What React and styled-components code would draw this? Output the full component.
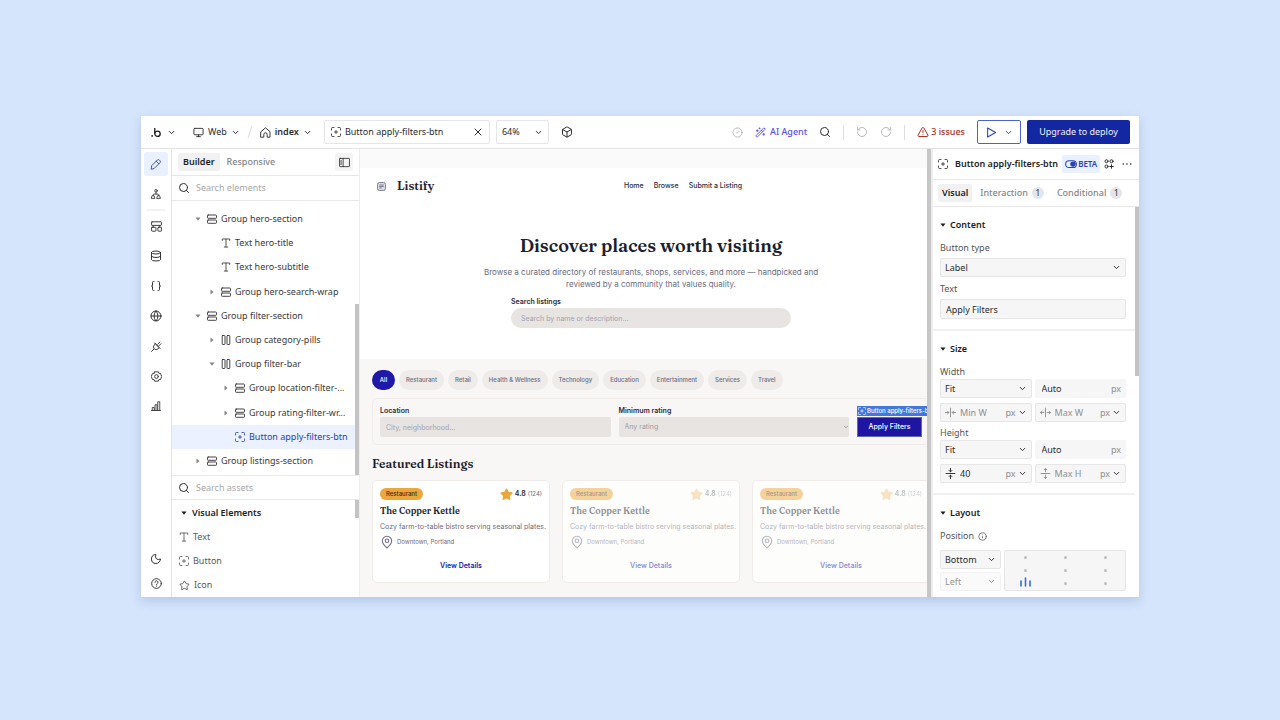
import styled, { createGlobalStyle, css } from "styled-components";
import {
  Box,
  Braces,
  ChevronDown,
  CircleCheck,
  Database,
  Globe,
  Info,
  MapPin,
  Monitor,
  Moon,
  RotateCcw,
  RotateCw,
  Search,
  Star,
  TriangleAlert,
  WandSparkles,
  X,
} from "lucide-react";

const tree = [
  { name: "Group hero-section", depth: 0, icon: "rows", state: "open" },
  { name: "Text hero-title", depth: 1, icon: "text" },
  { name: "Text hero-subtitle", depth: 1, icon: "text" },
  { name: "Group hero-search-wrap", depth: 1, icon: "rows", state: "closed" },
  { name: "Group filter-section", depth: 0, icon: "rows", state: "open" },
  { name: "Group category-pills", depth: 1, icon: "columns", state: "closed" },
  { name: "Group filter-bar", depth: 1, icon: "columns", state: "open" },
  { name: "Group location-filter-...", depth: 2, icon: "rows", state: "closed" },
  { name: "Group rating-filter-wr...", depth: 2, icon: "rows", state: "closed" },
  { name: "Button apply-filters-btn", depth: 2, icon: "button", active: true },
  { name: "Group listings-section", depth: 0, icon: "rows", state: "closed" },
];

const categories = [
  "All",
  "Restaurant",
  "Retail",
  "Health & Wellness",
  "Technology",
  "Education",
  "Entertainment",
  "Services",
  "Travel",
];

const Line = ({ size = 10, children, ...rest }) => (
  <svg
    width={size}
    height={size}
    viewBox="0 0 20 20"
    fill="none"
    stroke="currentColor"
    strokeWidth="1.7"
    strokeLinecap="round"
    strokeLinejoin="round"
    aria-hidden="true"
    {...rest}
  >
    {children}
  </svg>
);

const ButtonIcon = (props) => (
  <Line {...props}>
    <path d="M1 6V3a2 2 0 0 1 2-2h3M14 1h3a2 2 0 0 1 2 2v3M19 14v3a2 2 0 0 1-2 2h-3M6 19H3a2 2 0 0 1-2-2v-3M10 7v6M7 10h6" />
  </Line>
);

const RowsIcon = () => (
  <Line strokeWidth="1.9">
    <rect x="1" y="2" width="18" height="6.6" rx="1.4" />
    <rect x="1" y="12" width="18" height="6.6" rx="1.4" />
  </Line>
);

const ColumnsIcon = () => (
  <Line strokeWidth="1.9">
    <rect x="2.4" y="1" width="5.6" height="18" rx="1.2" />
    <rect x="12" y="1" width="5.6" height="18" rx="1.2" />
  </Line>
);

const TextIcon = () => (
  <Line>
    <path d="M2.5 5V2h15v3M10 2v16M6.5 18h7" />
  </Line>
);

const PencilIcon = () => (
  <Line size={12} strokeWidth="1.5">
    <path d="M2 18l.8-5.200L12.300 3.300a2.200 2.200 0 0 1 3.100 0l1.300 1.300a2.200 2.200 0 0 1 0 3.100L7.200 17.200zM10.300 5.300l4.400 4.400" />
  </Line>
);

const SitemapIcon = () => (
  <Line>
    <circle cx="10" cy="3.600" r="2.600" />
    <path d="M10 6.200v4M4.500 13v-1.500a1.300 1.300 0 0 1 1.300-1.300h8.400a1.300 1.300 0 0 1 1.300 1.300V13" />
    <path d="M2.800 13.500h3.400l1.600 5.300H1.200zM13.800 13.500h3.400l1.600 5.300h-6.600z" />
  </Line>
);

const ComponentsIcon = () => (
  <Line size={11}>
    <rect x="1" y="1.500" width="18" height="6.500" rx="1" />
    <path d="M4 8v3M16 8v3" />
    <rect x="1" y="11.500" width="8" height="7" rx="1" />
    <rect x="12.500" y="11.500" width="6.500" height="7" rx="1" />
  </Line>
);

const PlugIcon = () => (
  <Line size={11}>
    <path d="M1 19l4-4M8 5l7 7-2.200 2.200a4.950 4.950 0 0 1-7-7zM6.500 3.500l10 10M12 6l4-4M14 9l4-4" />
  </Line>
);

const GearIcon = () => (
  <Line size={11}>
    <path d="M6.800 1.500h6.400l1.200 2.700 2.900.3 2.200 5.500-2.200 5.500-2.900.3-1.200 2.700H6.800l-1.200-2.700-2.900-.3L.500 10l2.200-5.500 2.900-.3z" />
    <circle cx="10" cy="10" r="3.400" />
  </Line>
);

const ChartIcon = () => (
  <Line>
    <path d="M1 19h18M2.500 19v-6h4v6M8 19V7.500h4V19M13.500 19V1.500h4V19" />
  </Line>
);

const HelpIcon = () => (
  <Line size={11}>
    <circle cx="10" cy="10" r="8.800" />
    <path d="M7.300 7.800a2.700 2.700 0 1 1 4 2.400c-.9.500-1.300.9-1.300 1.900M10 14.600v.2" />
  </Line>
);

const HomeIcon = () => (
  <Line size={11}>
    <path d="M1.800 8.500L10 1.500l8.200 7V18.500H13v-5a3 3 0 0 0-6 0v5H1.800z" />
  </Line>
);

const PanelIcon = () => (
  <Line size={11} strokeWidth="1.5">
    <rect x="1" y="2.500" width="18" height="15" rx="1" />
    <path d="M7.500 2.500v15M3.800 6v8" />
  </Line>
);

const PlayIcon = () => (
  <Line size={11} strokeWidth="1.900">
    <path d="M3 1.800L17.500 10 3 18.200z" />
  </Line>
);

const ToggleIcon = () => (
  <Line size={12}>
    <rect x="1" y="4.500" width="18" height="11.500" rx="5.750" />
    <circle cx="13.300" cy="10.200" r="3.700" fill="currentColor" />
  </Line>
);

const GridPlusIcon = () => (
  <Line strokeWidth="2">
    <circle cx="5" cy="4.500" r="3" />
    <circle cx="15" cy="4.500" r="3" />
    <circle cx="5" cy="15" r="3" />
    <path d="M15 11.500v7M11.500 15h7" />
  </Line>
);

const DotsIcon = () => (
  <Line stroke="none" fill="currentColor">
    <circle cx="2.500" cy="10" r="1.600" />
    <circle cx="10" cy="10" r="1.600" />
    <circle cx="17.500" cy="10" r="1.600" />
  </Line>
);

const LimitIcon = ({ kind }) => (
  <Line size={11} transform={kind.endsWith("h") ? "rotate(90)" : undefined}>
    <path d="M10 2v16" />
    {kind.startsWith("min") ? (
      <path d="M0.500 10h6.500M4.500 7.500L7 10l-2.500 2.500M19.500 10H13M15.500 7.500L13 10l2.500 2.500" />
    ) : (
      <path d="M7 10H.800M3.300 7.500L.800 10l2.500 2.500M13 10h6.200M16.700 7.500l2.500 2.500-2.500 2.500" />
    )}
  </Line>
);

const SiteLogo = () => (
  <svg width="9" height="9" viewBox="0 0 18 18" fill="#dcdce4" stroke="#66667c" strokeWidth="1.600" aria-hidden="true">
    <rect x="1" y="1" width="16" height="16" rx="4" />
    <path d="M4.500 6h9M4.500 9h9M4.500 12h5" />
  </svg>
);

const BubbleLogo = () => (
  <svg width="10" height="11" viewBox="0 0 20 22" fill="none" stroke="#1c1c1c" strokeWidth="2.600" aria-hidden="true">
    <circle cx="2.300" cy="17.800" r="1.700" fill="#1c1c1c" stroke="none" />
    <path d="M7.500 2v11" />
    <circle cx="13" cy="13.500" r="5.400" />
  </svg>
);

const Caret = ({ open }) => (
  <svg width="6" height="6" viewBox="0 0 12 12" fill="currentColor" aria-hidden="true">
    <path d={open ? "M1 3h10L6 9.500z" : "M3 1v10l6-5z"} />
  </svg>
);

const Chevron = () => <ChevronDown size={9} strokeWidth={2.6} aria-hidden="true" />;

const nodeIcons = {
  rows: <RowsIcon />,
  columns: <ColumnsIcon />,
  text: <TextIcon />,
  button: <ButtonIcon />,
};

function UnitField({ label, kind, value }) {
  return (
    <Limit $filled={Boolean(value)}>
      <LimitIcon kind={kind} />
      <input aria-label={label} placeholder={label} defaultValue={value} />
      <UnitPicker>
        <select aria-label={`${label} unit`}>
          <option>px</option>
        </select>
        <Chevron />
      </UnitPicker>
    </Limit>
  );
}

function Picker({ label, value, id, muted }) {
  return (
    <Select $muted={muted}>
      <select id={id} aria-label={label} disabled={muted}>
        <option>{value}</option>
      </select>
      <Chevron />
    </Select>
  );
}

function ListingCard({ faded }) {
  return (
    <Card $faded={faded}>
      <CardTop>
        <Badge>Restaurant</Badge>
        <Rating $faded={faded}>
          <Star size={13} fill="#eca639" stroke="#eca639" />
          <b>4.8</b> (124)
        </Rating>
      </CardTop>
      <h3>The Copper Kettle</h3>
      <p>Cozy farm-to-table bistro serving seasonal plates.</p>
      <Place>
        <MapPin size={14} strokeWidth={1.8} />
        Downtown, Portland
      </Place>
      <a href="#details">View Details</a>
    </Card>
  );
}

function TopBar() {
  return (
    <Bar>
      <Crumb $gap={6} aria-label="Bubble menu">
        <BubbleLogo />
        <Chevron />
      </Crumb>
      <Breadcrumb>
        <Crumb>
          <Monitor size={11} />
          Web
          <Chevron />
        </Crumb>
        <svg width="6" height="14" viewBox="0 0 6 14" stroke="#dcdcdc" aria-hidden="true">
          <path d="M5 1L1 13" />
        </svg>
        <Crumb $strong>
          <HomeIcon />
          index
          <Chevron />
        </Crumb>
      </Breadcrumb>
      <ElementField>
        <ButtonIcon />
        <input aria-label="Selected element" defaultValue="Button apply-filters-btn" />
        <button aria-label="Clear selection">
          <X size={12} />
        </button>
      </ElementField>
      <Zoom>
        <select aria-label="Zoom">
          <option>64%</option>
        </select>
        <Chevron />
      </Zoom>
      <IconButton aria-label="Plugins">
        <Box size={12} />
      </IconButton>
      <Actions>
        <IconButton $muted aria-label="Saved">
          <CircleCheck size={11} />
        </IconButton>
        <Agent>
          <WandSparkles size={11} />
          AI Agent
        </Agent>
        <IconButton aria-label="Search">
          <Search size={12} />
        </IconButton>
        <Divider />
        <IconButton $muted aria-label="Undo">
          <RotateCcw size={12} />
        </IconButton>
        <IconButton $muted aria-label="Redo">
          <RotateCw size={12} />
        </IconButton>
        <Divider />
        <Issues>
          <TriangleAlert size={12} />3 issues
        </Issues>
        <Deploy>
          <Preview aria-label="Preview">
            <PlayIcon />
            <Chevron />
          </Preview>
          <Upgrade>Upgrade to deploy</Upgrade>
        </Deploy>
      </Actions>
    </Bar>
  );
}

function Sidebar() {
  return (
    <Side>
      <SideTabs>
        <Tab $active>Builder</Tab>
        <Tab>Responsive</Tab>
        <PanelButton aria-label="Toggle panel">
          <PanelIcon />
        </PanelButton>
      </SideTabs>
      <SearchRow>
        <Search size={12} />
        <input aria-label="Search elements" placeholder="Search elements" />
      </SearchRow>
      <TreeArea>
        <Tree>
          {tree.map((node) => (
            <Node key={node.name} $depth={node.depth} $active={node.active}>
              <NodeCaret>{node.state && <Caret open={node.state === "open"} />}</NodeCaret>
              {nodeIcons[node.icon]}
              {node.name}
            </Node>
          ))}
        </Tree>
        <TreeTrack>
          <Thumb />
        </TreeTrack>
      </TreeArea>
      <SearchRow $divided>
        <Search size={12} />
        <input aria-label="Search assets" placeholder="Search assets" />
      </SearchRow>
      <AssetArea>
        <Assets>
          <h2>
            <Caret open />
            Visual Elements
          </h2>
          <button>
            <TextIcon />
            Text
          </button>
          <button>
            <ButtonIcon />
            Button
          </button>
          <button>
            <Star size={11} />
            Icon
          </button>
        </Assets>
        <Track>
          <Thumb $height={18} />
        </Track>
      </AssetArea>
    </Side>
  );
}

function Canvas() {
  return (
    <Viewport>
      <Page>
        <SiteHeader>
          <SiteLogo />
          <strong>Listify</strong>
          <nav>
            <a href="#home">Home</a>
            <a href="#browse">Browse</a>
            <a href="#submit">Submit a Listing</a>
          </nav>
        </SiteHeader>
        <Hero>
          <h1>Discover places worth visiting</h1>
          <p>
            Browse a curated directory of restaurants, shops, services, and more — handpicked and
            reviewed by a community that values quality.
          </p>
          <SiteField $round>
            <label htmlFor="listing-search">Search listings</label>
            <input id="listing-search" placeholder="Search by name or description..." />
          </SiteField>
        </Hero>
        <Listings>
          <Pills>
            {categories.map((name, i) => (
              <Pill key={name} $active={i === 0}>
                {name}
              </Pill>
            ))}
          </Pills>
          <FilterBar>
            <SiteField>
              <label htmlFor="location">Location</label>
              <input id="location" placeholder="City, neighborhood..." />
            </SiteField>
            <SiteField>
              <label htmlFor="rating">Minimum rating</label>
              <RatingSelect>
                <select id="rating">
                  <option>Any rating</option>
                </select>
                <ChevronDown size={6} strokeWidth={3} />
              </RatingSelect>
            </SiteField>
            <Selected>
              <SelectedTag>
                <ButtonIcon size={8} />
                Button apply-filters-btn
              </SelectedTag>
              <button>Apply Filters</button>
            </Selected>
          </FilterBar>
          <h2>Featured Listings</h2>
          <Cards>
            <ListingCard />
            <ListingCard faded />
            <ListingCard faded />
          </Cards>
        </Listings>
      </Page>
    </Viewport>
  );
}

function Inspector() {
  return (
    <Panel>
      <PanelHead>
        <ButtonIcon />
        <strong>Button apply-filters-btn</strong>
        <Beta>
          <ToggleIcon />
          BETA
        </Beta>
        <IconButton aria-label="Replace element">
          <GridPlusIcon />
        </IconButton>
        <IconButton aria-label="More">
          <DotsIcon />
        </IconButton>
      </PanelHead>
      <PanelTabs>
        <Tab $active $small>
          Visual
        </Tab>
        <Tab>
          Interaction <Count>1</Count>
        </Tab>
        <Tab>
          Conditional <Count>1</Count>
        </Tab>
      </PanelTabs>
      <PanelBody>
        <Sections>
          <Section>
            <h2>
              <Caret open />
              Content
            </h2>
            <Stack>
              <FieldLabel htmlFor="button-type">Button type</FieldLabel>
              <Picker id="button-type" value="Label" />
            </Stack>
            <Stack>
              <FieldLabel htmlFor="button-text">Text</FieldLabel>
              <TextBox id="button-text" defaultValue="Apply Filters" />
            </Stack>
          </Section>
          <Section>
            <h2>
              <Caret open />
              Size
            </h2>
            <FieldLabel htmlFor="width-mode">Width</FieldLabel>
            <Pairs>
              <Picker id="width-mode" value="Fit" />
              <Auto>
                <input aria-label="Width value" defaultValue="Auto" />
                px
              </Auto>
              <UnitField label="Min W" kind="min-w" />
              <UnitField label="Max W" kind="max-w" />
            </Pairs>
            <FieldLabel htmlFor="height-mode">Height</FieldLabel>
            <Pairs>
              <Picker id="height-mode" value="Fit" />
              <Auto>
                <input aria-label="Height value" defaultValue="Auto" />
                px
              </Auto>
              <UnitField label="Min H" kind="min-h" value="40" />
              <UnitField label="Max H" kind="max-h" />
            </Pairs>
          </Section>
          <Section>
            <h2>
              <Caret open />
              Layout
            </h2>
            <FieldLabel as="span">
              Position <Info size={9} />
            </FieldLabel>
            <Position>
              <Picker label="Vertical position" value="Bottom" />
              <Picker label="Horizontal position" value="Left" muted />
              <Anchor aria-label="Anchor point">
                {Array.from({ length: 9 }, (_, i) =>
                  i === 6 ? (
                    <svg key={i} width="11" height="10" viewBox="0 0 11 10" stroke="#2f6bea" strokeWidth="1.600" strokeLinecap="round">
                      <path d="M1 4v5M5.500 1v8M10 4v5" />
                    </svg>
                  ) : (
                    <Dot key={i} />
                  )
                )}
              </Anchor>
            </Position>
          </Section>
        </Sections>
        <Track>
          <Thumb $height={169} />
        </Track>
      </PanelBody>
    </Panel>
  );
}

function App() {
  return (
    <>
      <GlobalStyle />
      <Stage>
        <Editor>
          <TopBar />
          <Workspace>
            <Rail>
              <RailButton $active aria-label="Design">
                <PencilIcon />
              </RailButton>
              <RailButton aria-label="Workflow">
                <SitemapIcon />
              </RailButton>
              <hr />
              <RailButton aria-label="Components">
                <ComponentsIcon />
              </RailButton>
              <RailButton aria-label="Data">
                <Database size={12} />
              </RailButton>
              <RailButton aria-label="Code">
                <Braces size={12} />
              </RailButton>
              <RailButton aria-label="Languages">
                <Globe size={12} />
              </RailButton>
              <RailButton aria-label="Plugins">
                <PlugIcon />
              </RailButton>
              <RailButton aria-label="Settings">
                <GearIcon />
              </RailButton>
              <RailButton aria-label="Logs">
                <ChartIcon />
              </RailButton>
              <RailFooter>
                <RailButton aria-label="Dark mode">
                  <Moon size={12} />
                </RailButton>
                <RailButton aria-label="Help">
                  <HelpIcon />
                </RailButton>
              </RailFooter>
            </Rail>
            <Sidebar />
            <Canvas />
            <Inspector />
          </Workspace>
        </Editor>
      </Stage>
    </>
  );
}

export default App;

const GlobalStyle = createGlobalStyle`
  * {
    box-sizing: border-box;
  }
  body {
    margin: 0;
    background: #d5e5fc;
    color: #2b2b2b;
    font-family: "Noto Sans", sans-serif;
    font-size: 9px;
    line-height: 14px;
  }
  h1, h2, h3, p {
    margin: 0;
  }
  button, input, select {
    margin: 0;
    padding: 0;
    border: 0;
    background: none;
    color: inherit;
    font: inherit;
    opacity: 1;
  }
  select {
    appearance: none;
  }
  input {
    min-width: 0;
  }
  a {
    color: inherit;
    text-decoration: none;
  }
  svg {
    flex: none;
  }
`;

const Stage = styled.div`
  display: flex;
  min-height: 100vh;
  padding: 116px 141px 123px;
`;

const Editor = styled.main`
  flex: 1;
  min-width: 0;
  display: flex;
  flex-direction: column;
  background: #fff;
  box-shadow: 0 4px 10px rgba(70, 100, 160, 0.24);
`;

const Workspace = styled.div`
  flex: 1;
  display: flex;
  min-height: 0;
`;

const Bar = styled.header`
  display: flex;
  align-items: center;
  height: 33px;
  padding: 0 9px 0 10px;
  border-bottom: 1px solid #e3e3e3;
`;

const iconText = css`
  display: flex;
  align-items: center;
  gap: 4px;
`;

const Crumb = styled.button`
  ${iconText}
  gap: ${(props) => props.$gap || 4}px;
  font-weight: ${(props) => (props.$strong ? 600 : 400)};
`;

const Breadcrumb = styled.div`
  display: flex;
  align-items: center;
  gap: 7px;
  margin: 0 12px 0 17px;
`;

const ElementField = styled.div`
  display: flex;
  align-items: center;
  gap: 4px;
  width: 166px;
  height: 24px;
  padding: 0 5px 0 6px;
  border: 1px solid #e4e6ea;
  border-radius: 2px;
  input {
    flex: 1;
  }
  button {
    display: flex;
  }
`;

const selectBox = css`
  display: grid;
  align-items: center;
  select {
    grid-area: 1 / 1;
    width: 100%;
    height: 100%;
  }
  svg {
    grid-area: 1 / 1;
    justify-self: end;
    pointer-events: none;
  }
`;

const Zoom = styled.div`
  ${selectBox}
  width: 53px;
  height: 24px;
  margin: 0 12px 0 6px;
  padding: 0 5px;
  border: 1px solid #e4e6ea;
  border-radius: 2px;
`;

const IconButton = styled.button`
  display: flex;
  color: ${(props) => (props.$muted ? "#b8b8b8" : "#2b2b2b")};
`;

const Actions = styled.div`
  display: flex;
  align-items: center;
  gap: 12px;
  margin-left: auto;
`;

const Agent = styled.button`
  ${iconText}
  color: #5a50ea;
  font-weight: 500;
`;

const Divider = styled.span`
  width: 1px;
  height: 15px;
  background: #dedede;
`;

const Issues = styled.button`
  ${iconText}
  gap: 2px;
  color: #a93226;
  font-weight: 500;
`;

const Deploy = styled.div`
  display: flex;
  gap: 6px;
`;

const Preview = styled.button`
  display: flex;
  align-items: center;
  justify-content: center;
  gap: 7px;
  width: 44px;
  height: 24px;
  border: 1px solid #4b62cf;
  border-radius: 2px;
  color: #2b41b5;
`;

const Upgrade = styled.button`
  height: 24px;
  width: 103px;
  border-radius: 2px;
  background: #1427a3;
  color: #f0f2fb;
`;

const Rail = styled.nav`
  display: flex;
  flex-direction: column;
  align-items: center;
  gap: 6px;
  width: 31px;
  padding: 3px 0 2px;
  border-right: 1px solid #e3e3e3;
  hr {
    width: 18px;
    height: 2px;
    margin: -3px 0;
    border: 0;
    background: #f1f1f1;
  }
`;

const RailButton = styled.button`
  display: flex;
  align-items: center;
  justify-content: center;
  width: 24px;
  height: 24px;
  border-radius: 3px;
  background: ${(props) => (props.$active ? "#e9f0ff" : "none")};
  color: ${(props) => (props.$active ? "#2f45c0" : "#333")};
`;

const RailFooter = styled.div`
  margin-top: auto;
`;

const Side = styled.aside`
  display: flex;
  flex-direction: column;
  width: 188px;
  border-right: 1px solid #ededed;
`;

const SideTabs = styled.div`
  display: flex;
  align-items: center;
  gap: 2px;
  height: 27px;
  padding: 0 6px;
  border-bottom: 1px solid #e8e8e8;
`;

const Tab = styled.button`
  ${iconText}
  height: 18px;
  padding: 0 ${(props) => (props.$small ? 4 : 5)}px;
  border-radius: 2px;
  background: ${(props) => (props.$active ? "#f1f1f1" : "none")};
  color: ${(props) => (props.$active ? "#1c1c1c" : "#858585")};
  font-weight: ${(props) => (props.$active ? 600 : 500)};
`;

const PanelButton = styled.button`
  display: flex;
  align-items: center;
  justify-content: center;
  width: 18px;
  height: 18px;
  margin-left: auto;
  border-radius: 2px;
  background: #f4f4f4;
`;

const SearchRow = styled.div`
  display: flex;
  align-items: center;
  gap: 6px;
  height: 25px;
  padding: 0 6px;
  border-top: ${(props) => (props.$divided ? "1px solid #ebebeb" : 0)};
  border-bottom: 1px solid #e8e8e8;
  input {
    flex: 1;
  }
  input::placeholder {
    color: #a8a8a8;
    opacity: 1;
  }
`;

const TreeArea = styled.div`
  flex: 1;
  display: flex;
`;

const Tree = styled.div`
  flex: 1;
  min-width: 0;
  display: flex;
  flex-direction: column;
  padding: 6px 0 2px;
`;

const Node = styled.button`
  flex: 1;
  display: flex;
  align-items: center;
  gap: 4px;
  min-height: 24px;
  padding-left: ${(props) => 23 + props.$depth * 14}px;
  background: ${(props) => (props.$active ? "#ebf1ff" : "none")};
  color: ${(props) => (props.$active ? "#2c40b4" : "#3a3a3a")};
  white-space: nowrap;
`;

const NodeCaret = styled.span`
  flex: none;
  display: flex;
  width: 8px;
  color: #858585;
`;

const Track = styled.div`
  width: 4px;
`;

const TreeTrack = styled(Track)`
  display: grid;
  grid-template-rows: 3fr 5fr;
  &::before {
    content: "";
  }
`;

const Thumb = styled.div`
  height: ${(props) => (props.$height ? `${props.$height}px` : "auto")};
  background: #c3c3c3;
`;

const AssetArea = styled.div`
  display: flex;
`;

const Assets = styled.div`
  flex: 1;
  padding-top: 1px;
  color: #5a5a5a;
  h2,
  button {
    display: flex;
    align-items: center;
    gap: 4px;
    height: 24px;
    padding: 0 7px;
    font-size: 9px;
  }
  h2 {
    gap: 5px;
    padding: 0 9px;
    color: #1c1c1c;
    font-weight: 600;
  }
`;

const Viewport = styled.div`
  flex: 1;
  min-width: 0;
  display: flex;
  overflow: hidden;
  padding-top: 19px;
  border-right: 4px solid #c6c6c6;
  background: #fafafa;
  font-family: Inter, sans-serif;
  font-size: 7px;
  line-height: 10px;
  color: #6b6b7e;
`;

const Page = styled.div`
  flex: none;
  display: flex;
  flex-direction: column;
  width: calc(100% + 15px);
  background: #fff;
  h1,
  h2,
  h3,
  strong {
    color: #1c1e2e;
    font-family: Fraunces, "Liberation Serif", serif;
    font-weight: 600;
  }
`;

const SiteHeader = styled.header`
  display: flex;
  align-items: center;
  height: 36px;
  padding: 0 200px 0 17px;
  strong {
    margin-left: 11px;
    font-size: 12px;
    line-height: 16px;
  }
  nav {
    display: flex;
    gap: 10px;
    margin-left: auto;
    color: #2b2b3a;
    font-weight: 500;
  }
`;

const Hero = styled.section`
  display: flex;
  flex-direction: column;
  align-items: center;
  padding: 30px 12px 31px;
  text-align: center;
  h1 {
    font-size: 18px;
    line-height: 24px;
  }
  p {
    width: 340px;
    margin: 8px 0 7px;
    font-size: 8px;
    line-height: 12px;
  }
`;

const SiteField = styled.div`
  display: grid;
  gap: 1px;
  flex: 1;
  width: ${(props) => (props.$round ? "280px" : "auto")};
  text-align: left;
  label {
    color: #2b2b3a;
    font-weight: 600;
  }
  input,
  select {
    width: 100%;
    height: 20px;
    padding: 0 ${(props) => (props.$round ? 10 : 6)}px;
    border-radius: ${(props) => (props.$round ? 10 : 2)}px;
    background: #e8e4e1;
    color: #9a9ca8;
  }
  input::placeholder {
    color: #9fa3b1;
    opacity: 1;
  }
`;

const RatingSelect = styled.div`
  ${selectBox}
  height: 20px;
  color: #8a8a8a;
`;

const Listings = styled.section`
  flex: 1;
  padding: 11px 12px 14px;
  background: #f8f7f6;
  h2 {
    margin: 11px 0 8px;
    font-size: 12px;
    line-height: 16px;
  }
`;

const Pills = styled.div`
  display: flex;
  gap: 4px;
`;

const Pill = styled.button`
  min-width: 23px;
  height: 20px;
  padding: 0 7px;
  border-radius: 10px;
  background: ${(props) => (props.$active ? "#2018a8" : "#eeebe9")};
  color: ${(props) => (props.$active ? "#fff" : "#6b6b7e")};
  font-size: 6px;
  font-weight: 500;
`;

const FilterBar = styled.div`
  display: flex;
  align-items: flex-end;
  gap: 8px;
  margin-top: 8px;
  padding: 7px;
  border: 1px solid #eeebe9;
  border-radius: 5px;
`;

const Selected = styled.div`
  position: relative;
  width: 65px;
  button {
    display: block;
    width: 100%;
    height: 20px;
    border: 1px solid #5a6ba8;
    background: #1e16a3;
    color: #fff;
    font-weight: 500;
  }
`;

const SelectedTag = styled.span`
  ${iconText}
  gap: 1px;
  position: absolute;
  bottom: 21px;
  left: 0;
  padding: 0 1px;
  background: #4377dc;
  color: #fff;
  font-size: 6px;
  font-weight: 500;
  white-space: nowrap;
`;

const Cards = styled.div`
  display: grid;
  grid-template-columns: repeat(3, minmax(0, 1fr));
  gap: 12px;
`;

const Card = styled.article`
  display: flex;
  flex-direction: column;
  height: 103px;
  padding: 6px 7px;
  border: 1px solid #eeebe9;
  border-radius: 5px;
  background: ${(props) => (props.$faded ? "#fdfdfc" : "#fff")};
  white-space: nowrap;
  > * {
    opacity: ${(props) => (props.$faded ? 0.5 : 1)};
  }
  h3 {
    margin: 4px 0 5px;
    font-size: 9px;
    line-height: 12px;
  }
  > a {
    margin: 12px auto 0;
    color: #2018b0;
    font-weight: 600;
  }
`;

const CardTop = styled.div`
  display: flex;
  align-items: center;
  justify-content: space-between;
  height: 14px;
`;

const Badge = styled.span`
  padding: 1px 6px;
  border-radius: 6px;
  background: #eca639;
  color: #3a2a1c;
  font-size: 6px;
  font-weight: 500;
`;

const Rating = styled.span`
  ${iconText}
  gap: 2px;
  font-size: 6px;
  opacity: ${(props) => (props.$faded ? 0.6 : 1)};
  b {
    color: #1c1e2e;
    font-size: 7px;
    font-weight: 600;
  }
`;

const Place = styled.span`
  ${iconText}
  gap: 3px;
  margin-top: 3px;
  font-size: 6px;
`;

const Panel = styled.aside`
  display: flex;
  flex-direction: column;
  width: 208px;
  border-left: 2px solid #ededed;
`;

const PanelHead = styled.div`
  display: flex;
  align-items: center;
  gap: 4px;
  height: 31px;
  padding: 0 7px 0 5px;
  border-bottom: 1px solid #e8e8e8;
  strong {
    margin-left: 3px;
    font-weight: 600;
    color: #1c1c1c;
    white-space: nowrap;
  }
  button:last-child {
    margin-left: auto;
  }
`;

const Beta = styled.span`
  display: flex;
  align-items: center;
  gap: 1px;
  height: 18px;
  padding: 0 3px;
  border-radius: 2px;
  background: #e9f0ff;
  color: #2b41b5;
  font-size: 8px;
  font-weight: 600;
`;

const PanelTabs = styled.div`
  display: flex;
  align-items: center;
  gap: 3px;
  height: 27px;
  padding: 0 5px;
  border-bottom: 1px solid #e8e8e8;
`;

const Count = styled.span`
  width: 12px;
  height: 12px;
  border-radius: 6px;
  background: #e2e6ec;
  color: #444;
  font-size: 8px;
  line-height: 12px;
`;

const PanelBody = styled.div`
  display: flex;
`;

const Sections = styled.div`
  flex: 1;
  min-width: 0;
`;

const Section = styled.section`
  padding: 11px 9px 10px 7px;
  border-bottom: 2px solid #f1f1f1;
  h2 {
    ${iconText}
    margin-bottom: 9px;
    color: #1c1c1c;
    font-size: 9px;
    font-weight: 600;
    line-height: 14px;
  }
  &:last-child {
    padding-bottom: 6px;
    border: 0;
  }
`;

const FieldLabel = styled.label`
  display: flex;
  align-items: center;
  gap: 4px;
  color: #555;
`;

const Stack = styled.div`
  display: grid;
  gap: 3px;
  & + & {
    margin-top: 5px;
  }
`;

const fieldFrame = css`
  border: 1px solid #e6e6e6;
  border-radius: 2px;
  background: #f6f6f6;
`;

const Select = styled.div`
  ${selectBox}
  ${fieldFrame}
  height: 19px;
  padding: 0 4px;
  opacity: ${(props) => (props.$muted ? 0.5 : 1)};
`;

const TextBox = styled.input`
  ${fieldFrame}
  width: 100%;
  height: 20px;
  padding: 0 5px;
`;

const Pairs = styled.div`
  display: grid;
  grid-template-columns: repeat(2, minmax(0, 1fr));
  gap: 5px 3px;
  & + label {
    margin-top: 4px;
  }
`;

const Auto = styled.div`
  display: flex;
  align-items: center;
  height: 19px;
  padding: 0 5px 0 7px;
  border-radius: 2px;
  background: #f6f6f6;
  color: #8f8f8f;
  input {
    flex: 1;
    color: #2b2b2b;
  }
`;

const Limit = styled.div`
  ${fieldFrame}
  display: flex;
  align-items: center;
  gap: 4px;
  height: 19px;
  padding: 0 4px;
  color: ${(props) => (props.$filled ? "#2b2b2b" : "#8f8f8f")};
  input {
    flex: 1;
    width: 0;
  }
  input::placeholder {
    color: #8f8f8f;
    opacity: 1;
  }
`;

const UnitPicker = styled.div`
  ${selectBox}
  width: 21px;
  color: #2b2b2b;
  select {
    color: #8f8f8f;
  }
`;

const Position = styled.div`
  display: grid;
  grid-template-columns: 1fr 2fr;
  gap: 3px;
  margin-top: 7px;
`;

const Anchor = styled.div`
  ${fieldFrame}
  display: grid;
  grid-template-columns: repeat(3, 1fr);
  grid-template-rows: repeat(3, 1fr);
  place-items: center;
  grid-area: 1 / 2 / 3 / 3;
  svg {
    align-self: start;
  }
`;

const Dot = styled.i`
  width: 3px;
  height: 3px;
  border-radius: 50%;
  background: #bdbdbd;
`;
